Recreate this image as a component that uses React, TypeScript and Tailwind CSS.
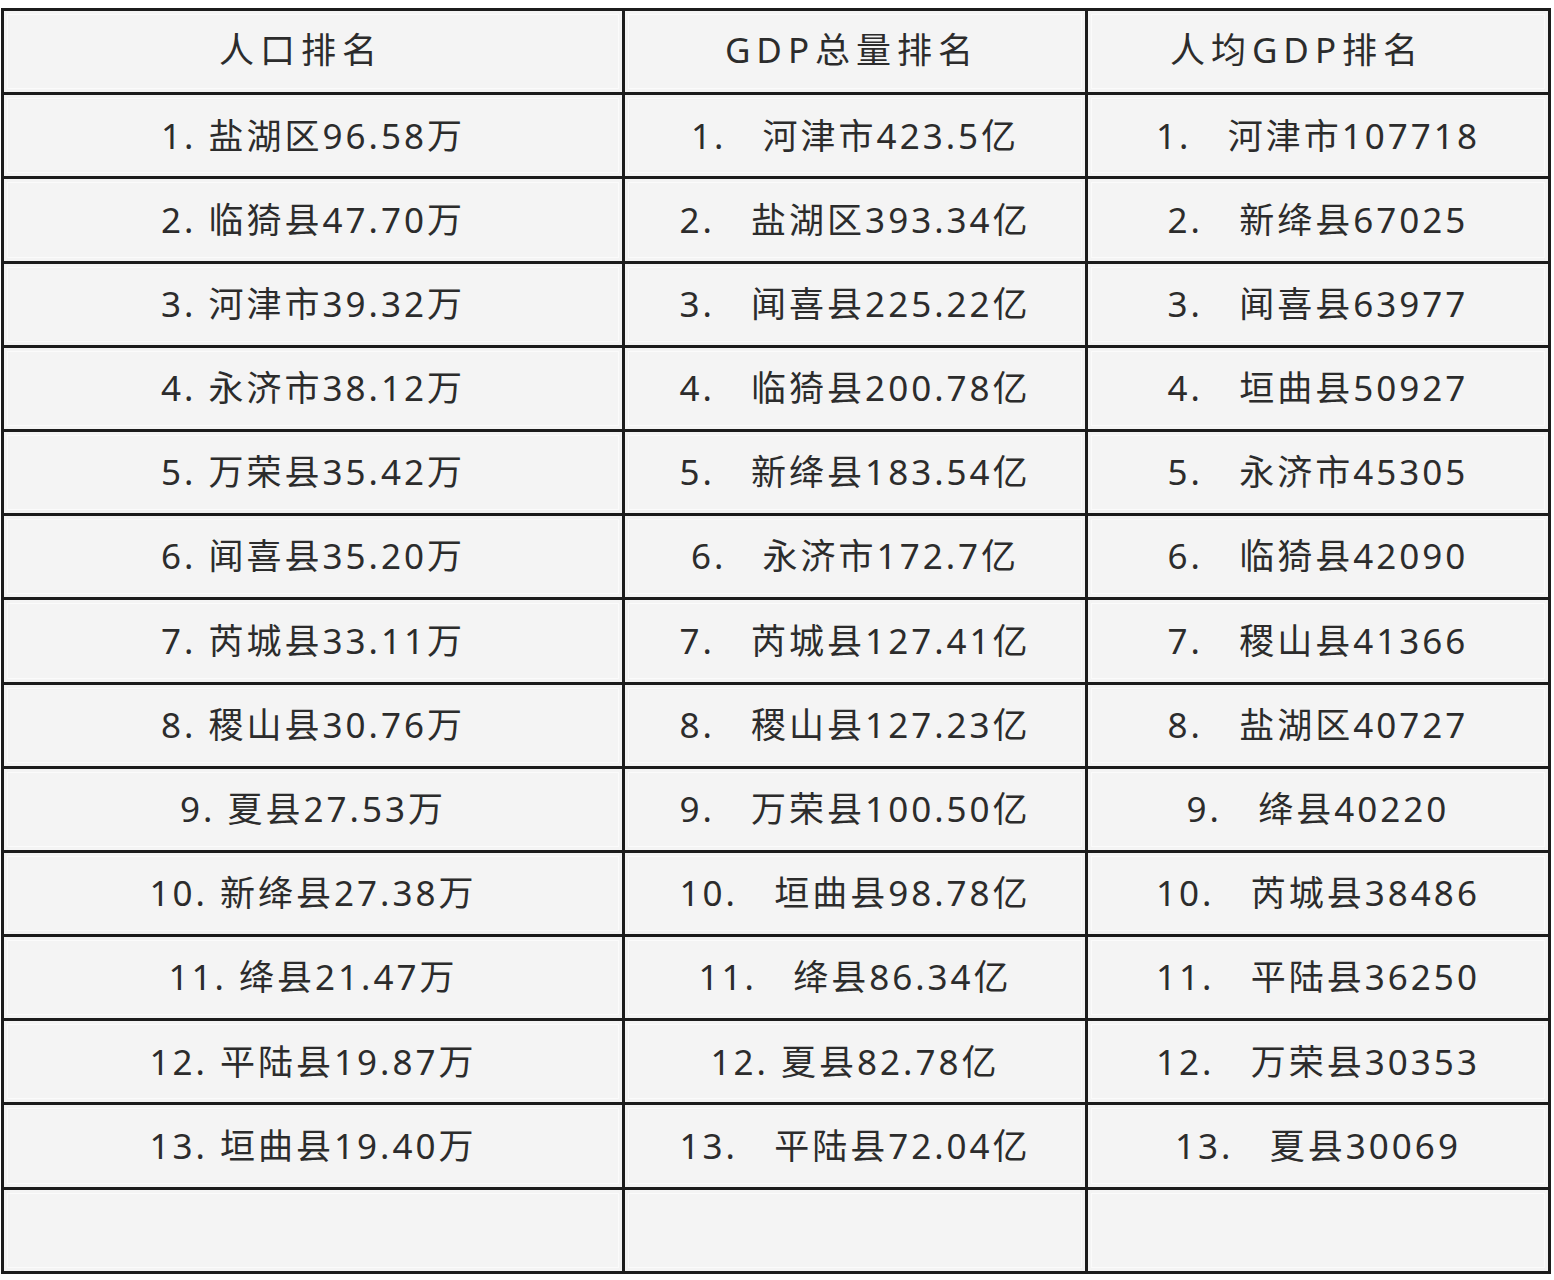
const HEAD: [string, string][] = [
  ["人口排名", "pr-[24px]"],
  ["GDP总量排名", "pr-[6px]"],
  ["人均GDP排名", "pr-[42px]"],
]

const ROWS: [string, string, string][] = [
  ["1. 盐湖区96.58万", "1.   河津市423.5亿", "1.   河津市107718"],
  ["2. 临猗县47.70万", "2.   盐湖区393.34亿", "2.   新绛县67025"],
  ["3. 河津市39.32万", "3.   闻喜县225.22亿", "3.   闻喜县63977"],
  ["4. 永济市38.12万", "4.   临猗县200.78亿", "4.   垣曲县50927"],
  ["5. 万荣县35.42万", "5.   新绛县183.54亿", "5.   永济市45305"],
  ["6. 闻喜县35.20万", "6.   永济市172.7亿", "6.   临猗县42090"],
  ["7. 芮城县33.11万", "7.   芮城县127.41亿", "7.   稷山县41366"],
  ["8. 稷山县30.76万", "8.   稷山县127.23亿", "8.   盐湖区40727"],
  ["9. 夏县27.53万", "9.   万荣县100.50亿", "9.   绛县40220"],
  ["10. 新绛县27.38万", "10.   垣曲县98.78亿", "10.   芮城县38486"],
  ["11. 绛县21.47万", "11.   绛县86.34亿", "11.   平陆县36250"],
  ["12. 平陆县19.87万", "12. 夏县82.78亿", "12.   万荣县30353"],
  ["13. 垣曲县19.40万", "13.   平陆县72.04亿", "13.   夏县30069"],
  ["", "", ""],
]

const cell =
  "h-[84.2px] border-[3px] border-[#1c1c1c] bg-[#f4f4f4] p-0 text-center align-middle whitespace-pre shadow-[inset_0_0_0_3px_#f4f4f4,inset_0_0_0_4px_#fbfbfb]"

export default function App() {
  return (
    <div
      className="min-h-[1280px] bg-white pt-[8px] pl-[1px] text-[#2c2c2c]"
      style={{ fontFamily: '"Noto Sans", "Noto Sans CJK SC", sans-serif' }}
    >
      <table className="w-[1547px] table-fixed border-collapse">
        <colgroup>
          <col className="w-[621px]" />
          <col className="w-[463px]" />
          <col className="w-[463px]" />
        </colgroup>
        <thead>
          <tr>
            {HEAD.map(([h, pad]) => (
              <th key={h} className={`${cell} ${pad} pb-[3px] text-[35px] font-normal tracking-[6px]`}>
                {h}
              </th>
            ))}
          </tr>
        </thead>
        <tbody>
          {ROWS.map((r, i) => (
            <tr key={i}>
              {r.map((v, j) => (
                <td key={j} className={`${cell} text-[35px] tracking-[3px]`}>
                  {v}
                </td>
              ))}
            </tr>
          ))}
        </tbody>
      </table>
    </div>
  )
}
